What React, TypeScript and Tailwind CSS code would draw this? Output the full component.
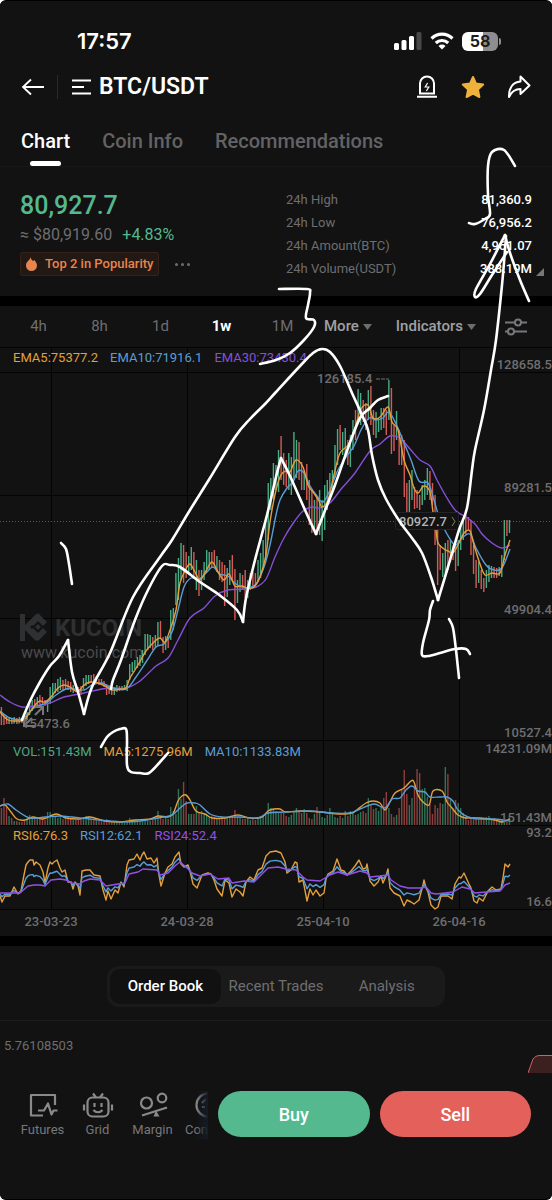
import { FC, ReactNode, useState } from 'react'
import clsx from 'clsx'

type Point = [number, number]

// high, low (chart y), a negative high marks a falling week
const candles: Point[] = [
  [-707, 725], [-714, 725], [-716, 724], [717, 724], [-718, 724], [717, 723], [-718, 724], [717, 723], [-718, 723], [-717, 722],
  [712, 720], [703, 715], [700, 711], [-699, 708], [697, 706], [-695, 704], [-697, 705], [-700, 706], [700, 712], [687, 704],
  [683, 698], [683, 693], [679, 692], [677, 690], [-680, 690], [-679, 689], [-681, 690], [-682, 692], [685, 693], [-684, 692],
  [-687, 694], [-686, 695], [678, 689], [675, 686], [675, 684], [-675, 683], [-674, 683], [676, 684], [-679, 685], [-679, 685],
  [-681, 687], [-684, 695], [-685, 694], [-686, 695], [687, 695], [685, 692], [-686, 691], [686, 690], [685, 690], [680, 691],
  [664, 680], [662, 672], [660, 669], [657, 668], [655, 666], [650, 663], [634, 655], [634, 650], [635, 648], [-637, 650],
  [635, 648], [622, 645], [-621, 638], [-637, 653], [636, 650], [-637, 648], [610, 640], [608, 630], [573, 605], [558, 600],
  [543, 580], [-545, 583], [-552, 578], [556, 575], [547, 570], [-552, 578], [560, 590], [-570, 596], [570, 590], [562, 580],
  [550, 572], [552, 570], [-552, 568], [-550, 566], [556, 572], [-560, 580], [-562, 582], [-565, 606], [568, 597], [560, 585],
  [-555, 580], [-569, 620], [580, 603], [573, 592], [-575, 590], [-570, 598], [580, 598], [573, 590], [-572, 588], [-573, 585],
  [560, 582], [553, 578], [540, 570], [518, 560], [483, 540], [478, 510], [463, 500], [465, 490], [450, 492], [-436, 480],
  [-453, 485], [-460, 487], [453, 490], [457, 495], [432, 480], [440, 478], [-442, 480], [-462, 490], [470, 490], [-464, 500],
  [-480, 525], [-490, 533], [500, 530], [-497, 535], [490, 535], [500, 541], [485, 530], [480, 510], [473, 500], [470, 492],
  [445, 478], [429, 465], [-425, 450], [432, 455], [428, 458], [-440, 465], [435, 467], [420, 450], [-410, 440], [389, 420],
  [393, 425], [-400, 422], [-403, 430], [390, 420], [-386, 425], [-410, 435], [412, 438], [418, 432], [408, 430], [-408, 428],
  [-410, 435], [380, 420], [-388, 454], [-425, 451], [411, 440], [-430, 465], [-435, 465], [-440, 497], [-483, 513], [480, 513],
  [470, 500], [-487, 509], [-490, 508], [-495, 510], [485, 505], [480, 500], [468, 495], [-471, 500], [-483, 505], [-495, 545],
  [-520, 585], [-545, 570], [553, 577], [543, 577], [-540, 570], [540, 562], [-545, 560], [-545, 571], [540, 566], [525, 550],
  [518, 540], [-515, 535], [-517, 530], [-520, 555], [-545, 574], [-560, 588], [562, 583], [-570, 589], [-578, 592], [570, 588],
  [565, 582], [566, 578], [-567, 578], [-568, 578], [567, 576], [555, 577], [520, 560], [-520, 536], [520, 533],
]

const volumes = [
  17, 27, 20, 9, 7, 4, 4, 3, 3, 4, 7, 10, 7, 7, 8, 8, 6, 5, 13, 13, 9, 8, 7, 8, 6, 7, 9, 7, 5, 5,
  5, 5, 8, 9, 9, 6, 6, 5, 5, 4, 5, 6, 4, 4, 4, 3, 3, 3, 2, 3, 7, 5, 5, 6, 4, 5, 5, 4, 4, 5,
  6, 14, 8, 6, 7, 6, 18, 14, 11, 36, 26, 43, 24, 11, 11, 11, 19, 12, 14, 12, 10, 9, 9, 8, 7, 6, 6, 7, 8, 7,
  9, 15, 8, 7, 6, 6, 7, 5, 6, 5, 7, 8, 9, 11, 22, 17, 16, 14, 13, 12, 12, 9, 8, 10, 14, 17, 14, 12, 16, 12,
  7, 6, 11, 18, 13, 8, 7, 10, 17, 13, 8, 7, 9, 7, 14, 9, 14, 12, 10, 11, 13, 14, 12, 27, 20, 16, 17, 14, 18, 27,
  33, 17, 11, 8, 10, 17, 36, 55, 31, 20, 27, 40, 56, 52, 36, 37, 28, 21, 11, 20, 17, 22, 21, 58, 51, 27, 17, 25, 22, 17,
  12, 8, 5, 7, 8, 7, 6, 7, 6, 8, 9, 6, 7, 5, 6, 5, 4, 3, 7,
]

const ema5: Point[] = [[0, 712], [8, 720], [16, 721], [24, 720], [30, 712], [36, 704], [40, 701], [45, 702], [51, 697], [58, 688], [64, 685], [70, 687], [78, 692], [83, 686], [90, 682], [98, 683], [105, 686], [112, 690], [120, 689], [126, 688], [130, 678], [138, 665], [146, 651], [155, 641], [160, 638], [165, 642], [170, 630], [176, 610], [180, 583], [186, 569], [190, 564], [195, 572], [200, 580], [206, 571], [212, 562], [218, 572], [224, 580], [229, 574], [235, 586], [242, 586], [248, 588], [254, 587], [260, 577], [266, 555], [270, 522], [276, 490], [281, 475], [286, 471], [290, 472], [296, 460], [303, 467], [308, 485], [313, 492], [319, 501], [322, 507], [328, 500], [334, 475], [340, 453], [348, 445], [355, 428], [361, 409], [368, 405], [373, 418], [380, 417], [388, 407], [392, 422], [398, 430], [404, 460], [410, 475], [414, 488], [418, 493], [424, 486], [430, 492], [433, 512], [436, 530], [438, 543], [444, 549], [448, 551], [453, 553], [458, 545], [464, 533], [470, 531], [474, 545], [480, 564], [485, 575], [492, 573], [500, 573], [505, 555], [510, 540]]

const ema10: Point[] = [[0, 711], [10, 718], [22, 719], [34, 708], [46, 703], [56, 695], [66, 689], [74, 689], [84, 690], [92, 685], [102, 683], [112, 688], [126, 689], [136, 677], [146, 662], [156, 647], [164, 644], [172, 632], [178, 610], [184, 587], [191, 578], [199, 579], [207, 572], [213, 567], [220, 574], [228, 576], [236, 584], [246, 588], [256, 584], [264, 567], [270, 545], [276, 515], [280, 500], [287, 488], [293, 482], [298, 471], [304, 473], [310, 486], [317, 496], [323, 502], [330, 490], [338, 470], [346, 457], [354, 446], [361, 430], [369, 418], [376, 420], [383, 418], [389, 412], [397, 426], [404, 443], [411, 460], [419, 481], [428, 483], [434, 500], [440, 520], [447, 534], [455, 545], [462, 538], [470, 534], [476, 548], [486, 565], [494, 570], [502, 568], [510, 549]]

const ema30: Point[] = [[0, 695], [10, 702], [22, 707], [34, 706], [50, 703], [64, 697], [84, 693], [108, 688], [126, 688], [140, 681], [156, 666], [168, 658], [178, 640], [190, 618], [204, 608], [215, 596], [228, 590], [246, 589], [256, 587], [266, 579], [275, 557], [284, 538], [294, 522], [303, 511], [312, 507], [320, 508], [330, 503], [342, 488], [355, 473], [370, 451], [380, 444], [390, 436], [400, 438], [410, 449], [420, 460], [430, 466], [437, 480], [447, 498], [456, 511], [466, 517], [475, 524], [482, 534], [492, 543], [502, 548], [510, 545]]

const volMa5: Point[] = [[0, 806], [5, 805], [11, 812], [17, 819], [25, 820], [33, 817], [43, 819], [56, 814], [66, 818], [80, 819], [90, 817], [105, 821], [120, 822], [135, 820], [150, 819], [158, 816], [168, 817], [173, 814], [178, 801], [182, 796], [186, 795], [190, 800], [196, 811], [205, 814], [212, 818], [225, 818], [238, 815], [250, 818], [262, 817], [268, 811], [274, 809], [280, 809], [286, 812], [300, 811], [320, 812], [340, 814], [352, 813], [358, 809], [366, 803], [373, 801], [380, 803], [385, 810], [390, 802], [395, 793], [404, 788], [411, 781], [414, 782], [418, 795], [422, 801], [429, 805], [433, 791], [442, 791], [447, 802], [452, 808], [458, 815], [466, 818], [480, 818], [495, 820], [502, 822], [510, 819]]

const volMa10: Point[] = [[0, 806], [8, 804], [16, 810], [30, 818], [45, 817], [60, 816], [72, 817], [90, 819], [110, 821], [125, 822], [140, 821], [158, 818], [172, 815], [180, 808], [187, 803], [195, 803], [200, 805], [210, 814], [222, 817], [240, 817], [258, 818], [268, 813], [285, 812], [310, 811], [330, 813], [350, 813], [360, 809], [374, 804], [385, 808], [392, 799], [400, 798], [406, 790], [412, 786], [418, 791], [425, 792], [430, 797], [440, 797], [447, 797], [453, 801], [458, 810], [468, 817], [480, 819], [495, 819], [510, 821]]

const rsi6: Point[] = [[0, 896], [2, 902], [5, 896], [10, 896], [14, 887], [18, 894], [21, 891], [24, 875], [26, 865], [28, 862], [30, 860], [33, 860], [34, 865], [36, 862], [40, 865], [43, 872], [45, 883], [48, 868], [50, 862], [52, 864], [54, 862], [57, 860], [60, 868], [62, 872], [65, 870], [68, 882], [71, 882], [73, 889], [75, 882], [78, 886], [80, 895], [82, 871], [86, 870], [90, 870], [94, 875], [100, 876], [103, 890], [106, 900], [108, 891], [111, 899], [115, 890], [118, 893], [121, 882], [124, 887], [127, 865], [129, 860], [134, 859], [137, 854], [140, 860], [142, 855], [144, 852], [147, 859], [151, 858], [154, 863], [157, 858], [159, 875], [161, 886], [165, 873], [168, 867], [172, 864], [175, 857], [179, 852], [181, 864], [184, 867], [188, 865], [190, 871], [193, 884], [197, 888], [202, 875], [208, 873], [211, 874], [214, 880], [217, 889], [222, 896], [225, 880], [229, 883], [232, 897], [236, 889], [240, 892], [243, 896], [246, 882], [250, 877], [254, 880], [258, 870], [262, 868], [266, 856], [270, 852], [276, 851], [281, 853], [285, 862], [287, 873], [291, 870], [295, 862], [297, 863], [299, 882], [303, 880], [307, 901], [310, 889], [313, 895], [316, 890], [320, 896], [324, 893], [326, 879], [328, 874], [333, 871], [337, 859], [341, 870], [344, 871], [347, 875], [351, 871], [355, 866], [359, 860], [363, 869], [366, 868], [367, 864], [370, 881], [374, 886], [378, 882], [381, 876], [383, 883], [386, 876], [388, 869], [390, 888], [394, 893], [400, 896], [404, 906], [407, 900], [411, 902], [414, 904], [419, 900], [423, 885], [424, 880], [426, 888], [428, 892], [431, 905], [435, 909], [438, 907], [441, 896], [448, 896], [452, 899], [455, 884], [459, 877], [461, 878], [464, 873], [469, 884], [471, 888], [474, 901], [477, 903], [479, 898], [483, 901], [488, 891], [492, 887], [496, 890], [501, 889], [503, 878], [505, 864], [508, 867], [510, 864]]

const rsi24: Point[] = [[0, 893], [20, 893], [28, 886], [34, 885], [40, 885], [45, 886], [51, 880], [60, 879], [66, 880], [72, 883], [80, 884], [84, 881], [90, 879], [100, 880], [106, 886], [118, 884], [125, 883], [129, 874], [138, 872], [143, 869], [157, 870], [160, 875], [168, 873], [176, 865], [180, 862], [186, 867], [192, 873], [200, 876], [210, 874], [218, 879], [229, 878], [232, 883], [244, 881], [254, 882], [260, 876], [268, 868], [278, 867], [286, 869], [296, 870], [303, 877], [307, 880], [320, 881], [330, 875], [338, 872], [347, 875], [360, 871], [367, 873], [370, 877], [380, 876], [388, 875], [391, 880], [400, 886], [408, 888], [420, 888], [426, 887], [431, 893], [436, 894], [445, 893], [453, 892], [462, 887], [470, 889], [475, 893], [486, 892], [500, 891], [505, 885], [510, 883]]

const valueAt = (points: Point[], x: number) => {
  const i = Math.max(1, points.findIndex(p => p[0] >= x))
  const [x0, y0] = points[i - 1]
  const [x1, y1] = points[i]
  return y0 + ((y1 - y0) * (x - x0)) / (x1 - x0)
}

const rsi12: Point[] = rsi6.map(([x, y]) => [x, y * 0.42 + valueAt(rsi24, x) * 0.58])

// Catmull-Rom spline through the points
const smooth = (p: Point[]) =>
  p.slice(1).reduce((d, [x, y], i) => {
    const a = p[Math.max(0, i - 1)]
    const b = p[i]
    const c = p[Math.min(p.length - 1, i + 2)]
    const c1 = [b[0] + (x - a[0]) / 6, b[1] + (y - a[1]) / 6]
    const c2 = [x - (c[0] - b[0]) / 6, y - (c[1] - b[1]) / 6]
    return `${d}C${c1} ${c2} ${x},${y}`
  }, `M${p[0]}`)

const sketch: Point[][] = [
  [[22, 720], [30, 701], [40, 682], [50, 666], [59, 656], [68, 640]],
  [[68, 640], [72, 672], [78, 692], [84, 714]],
  [[84, 714], [92, 687], [110, 653], [133, 597], [160, 557], [172, 540], [190, 510], [210, 478], [235, 437], [250, 419], [265, 404], [276, 392], [300, 366], [313, 353], [322, 349], [330, 352], [340, 366], [352, 393], [362, 415], [368, 430], [372, 455], [378, 480], [386, 499], [400, 522], [412, 538], [422, 553], [431, 577], [438, 600]],
  [[438, 600], [448, 567], [459, 530], [467, 508], [472, 470], [475, 450], [484, 410], [491, 370], [496, 340], [502, 285], [505, 250], [506, 236]],
  [[111, 689], [113, 680], [121, 660], [135, 620], [148, 590], [162, 566], [170, 565], [180, 567], [200, 582], [218, 594], [237, 610], [243, 622]],
  [[243, 622], [246, 598], [255, 560], [267, 515], [276, 477], [281, 458]],
  [[281, 458], [290, 476], [305, 510], [316, 534]],
  [[316, 534], [322, 518], [335, 485], [348, 448], [360, 418], [370, 408], [378, 400], [388, 396]],
  [[61, 543], [66, 549], [69, 564], [72, 584]],
  [[101, 747], [107, 737], [113, 732], [120, 729], [126, 729], [127, 740], [127, 765], [131, 772], [140, 773], [149, 773], [160, 762], [168, 753]],
  [[279, 289], [307, 289], [310, 293], [308, 305], [306, 318], [314, 320], [314, 327], [304, 340], [290, 353], [276, 360], [260, 364]],
  [[433, 601], [430, 610], [429, 620], [423, 643], [422, 655], [428, 656], [440, 653], [455, 649], [466, 649], [470, 654]],
  [[449, 619], [453, 628], [456, 650], [459, 678]],
  [[515, 166], [504, 150], [492, 152], [488, 166], [488, 195], [490, 214], [485, 219], [475, 224], [469, 223]],
  [[505, 235], [490, 264], [476, 289], [475, 297], [480, 294], [492, 275], [507, 252]],
  [[505, 235], [510, 253], [520, 280], [529, 301]],
]

const Line: FC<{ points: Point[]; color: string }> = ({ points, color }) => (
  <path d={smooth(points)} fill="none" stroke={color} strokeWidth={1.4} />
)

const SharpLine: FC<{ points: Point[]; color: string }> = ({ points, color }) => (
  <polyline points={points.join(' ')} fill="none" stroke={color} strokeWidth={1.4} strokeLinejoin="round" />
)

const PriceChart = () => (
  <svg className="block w-full" viewBox="0 347 552 589" role="img" aria-label="BTC/USDT weekly chart">
    <g stroke="#040404" strokeWidth={1}>
      {[347.5, 372.5, 495.5, 618.5, 740.5, 825.5, 909.5].map(y => <path key={y} d={`M0 ${y}H552`} />)}
      {[51.5, 187.5, 323.5, 459.5].map(x => <path key={x} d={`M${x} 347V909`} />)}
    </g>
    <g fill="#2f3032">
      <path d="M20 614h5v11l11-11 4 4-10 9 10 10-4 4-11-11v11h-5zM38 613l9 9-4 4-5-5-5 5-4-4zM29 632l4-4 5 5 5-5 4 4-9 9zM38 624l3 3-3 3-3-3z" />
      <text x={55} y={636} fontSize={24} fontWeight={700}>KUCOIN</text>
    </g>
    <text x={21} y={658} fontSize={16} fill="#4a4a4c">www.kucoin.com</text>
    <path d="M0 521.5H552" stroke="#5c5c5e" strokeDasharray="1 2" />

    {candles.map(([high, low], i) => (
      <rect key={i} x={0.7 + i * 2.566} y={Math.abs(high)} width={1.4} height={low - Math.abs(high)} fill={high < 0 ? '#d65a56' : '#48ad85'} />
    ))}
    {candles.map(([high], i) => (
      <rect key={i} x={0.7 + i * 2.566} y={825 - volumes[i]} width={1.4} height={volumes[i]} fill={high < 0 ? '#8c3f3e' : '#307258'} />
    ))}
    <Line points={ema30} color="#8550d8" />
    <Line points={ema10} color="#5a9ed6" />
    <Line points={ema5} color="#e3a03c" />
    <Line points={volMa5} color="#e3a03c" />
    <Line points={volMa10} color="#5a9ed6" />
    <SharpLine points={rsi6} color="#e3a03c" />
    <SharpLine points={rsi12} color="#5a9ed6" />
    <SharpLine points={rsi24} color="#9550e8" />

    <path d="M24 715v11h11M25 725l7-7M35 707h8v8M43 707l-8 8" fill="none" stroke="#77777a" strokeWidth={2} />
    <g fill="#6e6e70" fontSize={13} fontWeight={500}>
      <text x={317} y={383}>126185.4</text>
      <path d="M376 379h13M6 723h14" stroke="#6e6e70" strokeDasharray="4 1" />
      <text x={22} y={728}>15473.6</text>
      <g textAnchor="end">
        <text x={552} y={369}>128658.5</text>
        <text x={552} y={492}>89281.5</text>
        <text x={552} y={614}>49904.4</text>
        <text x={552} y={737}>10527.4</text>
        <text x={552} y={753}>14231.09M</text>
        <text x={552} y={822}>151.43M</text>
        <text x={552} y={837}>93.2</text>
        <text x={552} y={906}>16.6</text>
      </g>
      <g textAnchor="middle">
        <text x={51} y={926}>23-03-23</text>
        <text x={187} y={926}>24-03-28</text>
        <text x={323} y={926}>25-04-10</text>
        <text x={459} y={926}>26-04-16</text>
      </g>
    </g>
    <rect x={395.5} y={512.5} width={63} height={17} rx={2} fill="#121212" stroke="#242426" />
    <text x={399} y={526} fontSize={13} fontWeight={500} fill="#b4b4b6">80927.7</text>
    <path d="M452 517l3 4.500-3 4.500" fill="none" stroke="#7d8a5c" />
  </svg>
)

const Legend: FC<{ items: [string, string][]; className: string }> = ({ items, className }) => (
  <div className={clsx('absolute left-[13px] flex gap-3 text-[13px] leading-4', className)}>
    {items.map(([label, color]) => <span key={label} className={color}>{label}</span>)}
  </div>
)

const StatusBar = () => (
  <div className="flex h-6 items-center justify-between pl-[77px] pr-[51px]">
    <span className="font-[Inter,sans-serif] text-[22px] font-semibold">17:57</span>
    <div className="flex items-center gap-2">
      <svg width="28" height="18" viewBox="0 0 28 18" fill="#fff">
        <rect y="11" width="5" height="7" rx="1.500" />
        <rect x="7.500" y="8" width="5" height="10" rx="1.500" />
        <rect x="15" y="4" width="5" height="14" rx="1.500" />
        <rect x="22.500" width="5" height="18" rx="1.500" fill="#48484a" />
      </svg>
      <svg width="24" height="18" viewBox="0 0 24 18" fill="none" stroke="#fff" strokeWidth="3.200">
        <path d="M1.500 6.500a15 15 0 0 1 21 0M5.800 11a9 9 0 0 1 12.400 0" />
        <path d="M12 17.500l-3.500-3.600a5 5 0 0 1 7 0z" fill="#fff" stroke="none" />
      </svg>
      <div className="flex items-center gap-px">
        <span className="flex h-[19px] w-9 items-center justify-center rounded-md bg-linear-to-r from-white from-58% to-[#8e8e90] to-58% font-[Inter,sans-serif] text-[16px] leading-[19px] font-bold text-[#1c1c1e]">58</span>
        <span className="h-[7px] w-[2px] rounded-r-full bg-[#8e8e90]" />
      </div>
    </div>
  </div>
)

const NavBar = () => (
  <header className="mt-[22px] flex h-6 items-center pl-[21px] pr-[21px]">
    <button aria-label="Back">
      <svg width="24" height="24" viewBox="0 0 24 24" fill="none" stroke="#fff" strokeWidth="1.800">
        <path d="M23 12H2M10 4.500L2 12l8 7.500" />
      </svg>
    </button>
    <span className="ml-3 h-6 w-px bg-[#2a2a2c]" />
    <button className="ml-3.5 flex items-center gap-2">
      <svg width="19" height="16" viewBox="0 0 19 16" stroke="#fff" strokeWidth="2.200">
        <path d="M0 1.500h19M0 8h12M0 14.500h19" />
      </svg>
      <h1 className="text-[23px] font-semibold">BTC/USDT</h1>
    </button>
    <div className="ml-auto flex items-center gap-[22px]">
      <button aria-label="Price alert">
        <svg width="24" height="24" viewBox="0 0 24 24" fill="none" stroke="#fff" strokeWidth="2">
          <path d="M5 18.500V8.500a7 7 0 0 1 14 0v10zM2 21.800h20" />
          <path d="M12.600 8l-2.400 4h3.600l-2.400 4" strokeWidth="1.200" />
        </svg>
      </button>
      <button aria-label="Favourite">
        <svg width="24" height="24" viewBox="0 0 24 24" fill="#edb13c" stroke="#edb13c" strokeWidth="2" strokeLinejoin="round">
          <path d="M12 2l3 6.600 7.200.9-5.300 4.900 1.500 7.600L12 18.600 5.600 22l1.500-7.600L1.800 9.500l7.200-.9z" />
        </svg>
      </button>
      <button aria-label="Share">
        <svg width="24" height="24" viewBox="0 0 24 24" fill="none" stroke="#fff" strokeWidth="2" strokeLinejoin="round">
          <path d="M13.500 1.500L22.500 10.500l-9 8.500v-5C8 14 4.500 16.500 2 22 1.600 13.500 5.500 7 13.500 6.500z" />
        </svg>
      </button>
    </div>
  </header>
)

const stats = [
  ['24h High', '81,360.9'],
  ['24h Low', '76,956.2'],
  ['24h Amount(BTC)', '4,961.07'],
  ['24h Volume(USDT)', '388.19M'],
]

const Ticker = () => (
  <section className="flex justify-between border-t border-[#18181a] px-5 pt-[21px] pb-4">
    <div className="pt-1">
      <p className="text-[25px] leading-7 font-medium text-[#55b98f]">80,927.7</p>
      <p className="mt-[5px] flex gap-2.5 text-[16px] leading-5">
        <span className="text-[#6e6e70]">≈ $80,919.60</span>
        <span className="text-[#55b98f]">+4.83%</span>
      </p>
      <div className="mt-[7px] flex items-center gap-4">
        <span className="flex h-6 items-center gap-2 rounded-xs border border-[#36221a] bg-[#221814] px-[5px] text-[13px] font-medium text-[#e8844e]">
          <svg width="11" height="14" viewBox="0 0 11 14" fill="#e8844e">
            <path d="M4.500 0c.3 2 1.500 3 2.500 4l1.300-1C10 5 11 6.800 11 8.500A5.500 5.500 0 0 1 0 8.500C0 6 1.300 4.600 2.500 3.500 3.600 2.500 4.300 1.600 4.500 0z" />
          </svg>
          Top 2 in Popularity
        </span>
        <button aria-label="More tags" className="flex gap-[3px]">
          <i className="size-[3px] rounded-full bg-[#6e6e70]" />
          <i className="size-[3px] rounded-full bg-[#6e6e70]" />
          <i className="size-[3px] rounded-full bg-[#6e6e70]" />
        </button>
      </div>
    </div>
    <dl className="relative w-[246px] text-[13px] leading-[23px]">
      {stats.map(([label, value]) => (
        <div key={label} className="flex justify-between">
          <dt className="text-[#6e6e70]">{label}</dt>
          <dd className="font-medium">{value}</dd>
        </div>
      ))}
      <svg className="absolute -right-3 bottom-1" width="8" height="8" viewBox="0 0 8 8" fill="#77777a"><path d="M8 0v8H0z" /></svg>
    </dl>
  </section>
)

const Caret = () => (
  <svg width="9" height="6" viewBox="0 0 9 6" fill="#6e6e70"><path d="M0 0h9L4.500 6z" /></svg>
)

const IntervalBar = () => {
  const [interval, setInterval] = useState('1w')
  return (
    <div className="flex h-[41px] items-center pr-[25px] pl-2 text-[15px]">
      {['4h', '8h', '1d', '1w', '1M'].map(item => (
        <button key={item} onClick={() => setInterval(item)} className={clsx('w-[61px]', item === interval ? 'font-bold text-white' : 'text-[#6e6e70]')}>
          {item}
        </button>
      ))}
      <button aria-haspopup="menu" className="ml-[11px] flex items-center gap-1 font-medium text-[#a0a0a2]">More <Caret /></button>
      <button aria-haspopup="menu" className="ml-6 flex items-center gap-1 font-medium text-[#a0a0a2]">Indicators <Caret /></button>
      <button aria-label="Chart settings" className="ml-auto">
        <svg width="22" height="18" viewBox="0 0 22 18" fill="none" stroke="#77777a" strokeWidth="2">
          <path d="M0 4.500h10M16 4.500h6M0 13.500h3M9 13.500h13" />
          <circle cx="13" cy="4.500" r="3" />
          <circle cx="6" cy="13.500" r="3" />
        </svg>
      </button>
    </div>
  )
}

const Shortcut: FC<{ label: string; children: ReactNode }> = ({ label, children }) => (
  <button className="flex w-[55px] shrink-0 flex-col items-center gap-[3px] text-[13px] leading-4 text-[#77777a]">
    <svg width="32" height="28" viewBox="0 0 32 28" fill="none" stroke="#8a8a8c" strokeWidth="2.200" strokeLinejoin="round">{children}</svg>
    {label}
  </button>
)

const BottomBar = () => (
  <footer className="flex h-[126px] items-start gap-2.5 pt-[18px] pr-[21px] pl-[15px]">
    <nav className="relative flex h-12 w-[193px] shrink-0 overflow-hidden">
      <Shortcut label="Futures">
        <path d="M16 24.500H4V4h24v10M11 19.500h6l4-7 3.500 11 2-4h4" />
      </Shortcut>
      <Shortcut label="Grid">
        <rect x="5.500" y="6.500" width="21" height="19" rx="5" />
        <path d="M11 2.500l3 4M21 2.500l-3 4M2 13.500v6M30 13.500v6M12.500 12v4M19.500 12v4M11.500 19c2.500 3 6.500 3 9 0" />
      </Shortcut>
      <Shortcut label="Margin">
        <circle cx="9.500" cy="12" r="5.500" />
        <circle cx="25" cy="7" r="4.300" />
        <path d="M5 24.500l25-8" />
        <path d="M19 19.500l3.500 6h-6z" fill="#8a8a8c" stroke="none" />
      </Shortcut>
      <Shortcut label="Convert">
        <circle cx="16" cy="14" r="11.500" />
        <path d="M10 12l4-4M10 16h3" />
      </Shortcut>
      <span className="absolute inset-y-0 right-0 w-3 bg-linear-to-r from-transparent to-[#151b26]" />
    </nav>
    <button className="h-[46px] flex-1 rounded-full bg-[#55b98f] text-[18px] font-medium">Buy</button>
    <button className="h-[46px] flex-1 rounded-full bg-[#e4605b] text-[18px] font-medium">Sell</button>
  </footer>
)

export default function App() {
  const [page, setPage] = useState('Chart')
  const [panel, setPanel] = useState('Order Book')

  return (
    <div className="bg-white">
      <main className="relative overflow-hidden rounded-md border-y border-black bg-black font-[Roboto,sans-serif] text-white">
        <div className="bg-[#121212] pt-7">
          <StatusBar />
          <NavBar />
          <nav className="mt-[30px] flex gap-8 pl-[21px] text-[20px] leading-6 font-medium">
            {['Chart', 'Coin Info', 'Recommendations'].map(item => (
              <button key={item} onClick={() => setPage(item)} className={clsx('flex flex-col items-center gap-2', item === page ? 'text-white' : 'text-[#636365]')}>
                {item}
                <span className={clsx('h-[5px] w-[31px] rounded-full', item === page && 'bg-white')} />
              </button>
            ))}
          </nav>
          <Ticker />
        </div>

        <div className="mt-2.5 bg-[#121212]">
          <IntervalBar />
          <div className="relative">
            <PriceChart />
            <Legend className="top-[3px]" items={[['EMA5:75377.2', 'text-[#e3a03c]'], ['EMA10:71916.1', 'text-[#5a9ed6]'], ['EMA30:73430.4', 'text-[#8550d8]']]} />
            <Legend className="top-[397px]" items={[['VOL:151.43M', 'text-[#4fa885]'], ['MA5:1275.96M', 'text-[#e3a03c]'], ['MA10:1133.83M', 'text-[#5a9ed6]']]} />
            <Legend className="top-[481px]" items={[['RSI6:76.3', 'text-[#e3a03c]'], ['RSI12:62.1', 'text-[#5a9ed6]'], ['RSI24:52.4', 'text-[#9550e8]']]} />
          </div>
        </div>

        <div className="mt-2.5 bg-[#121212] pt-5">
          <div className="mx-auto flex h-[41px] w-[338px] rounded-xl bg-[#1a1a1b] p-[3px] text-[15px]">
            {['Order Book', 'Recent Trades', 'Analysis'].map(item => (
              <button key={item} onClick={() => setPanel(item)} className={clsx('flex-1 rounded-[10px] whitespace-nowrap', item === panel ? 'bg-[#111] font-medium text-white' : 'text-[#6e6e70]')}>
                {item}
              </button>
            ))}
          </div>
          <div className="relative mt-[13px] h-[53px] border-t border-[#1c1c1e] pt-[17px] pl-1 text-[13px] leading-4 text-[#6e6e70]">
            5.76108503
            <svg className="absolute right-0 bottom-0" width="24" height="18" viewBox="0 0 24 18">
              <path d="M0 18l5-14c2-2.500 4-3.500 7-3.500h12V18z" fill="#3c2020" />
              <path d="M0 18l5-14c2-2.500 4-3.500 7-3.500h12" fill="none" stroke="#d4605e" />
            </svg>
          </div>
          <BottomBar />
        </div>

        <svg className="pointer-events-none absolute inset-x-0 top-0 w-full" viewBox="0 1 552 1198" fill="none" stroke="#fff" strokeWidth={2.6} strokeLinecap="round" strokeLinejoin="round">
          {sketch.map((points, i) => <path key={i} d={smooth(points)} />)}
        </svg>
      </main>
    </div>
  )
}
